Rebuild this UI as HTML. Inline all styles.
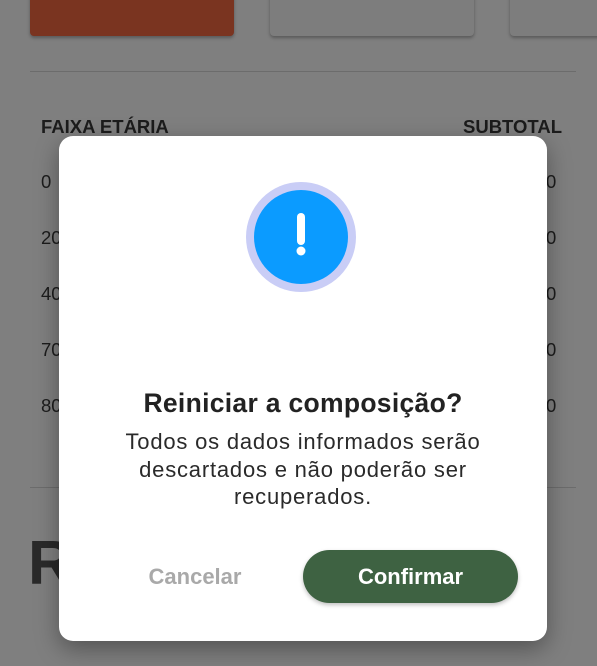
<!DOCTYPE html>
<html><head><meta charset="utf-8"><style>
body{margin:0;width:597px;height:666px;overflow:hidden;background:#7f7f7f;font-family:"Liberation Sans",sans-serif;position:relative}
.a{position:absolute}
.t{position:absolute;font-size:18.5px;color:#1c1c1c}
</style></head><body>
<div class="a" style="left:30px;top:-10px;width:204px;height:46px;background:#7a3420;border-radius:4px;box-shadow:0 2px 3px rgba(0,0,0,.3)"></div>
<div class="a" style="left:270px;top:-10px;width:204px;height:46px;background:#7d7d7d;border-radius:4px;box-shadow:0 2px 3px rgba(0,0,0,.3)"></div>
<div class="a" style="left:510px;top:-10px;width:100px;height:46px;background:#7d7d7d;border-radius:4px;box-shadow:0 2px 3px rgba(0,0,0,.3)"></div>
<div class="a" style="left:30px;top:71px;width:546px;height:1px;background:#6c6c6c"></div>
<div class="t" style="left:41px;top:116px;font-weight:bold">FAIXA ETÁRIA</div>
<div class="t" style="left:463px;top:116px;font-weight:bold">SUBTOTAL</div>
<div class="t" style="left:41px;top:171px">0</div>
<div class="t" style="left:41px;top:227px">20</div>
<div class="t" style="left:41px;top:283px">40</div>
<div class="t" style="left:41px;top:339px">70</div>
<div class="t" style="left:41px;top:395px">80</div>
<div class="t" style="left:546px;top:171px">0</div>
<div class="t" style="left:546px;top:227px">0</div>
<div class="t" style="left:546px;top:283px">0</div>
<div class="t" style="left:546px;top:339px">0</div>
<div class="t" style="left:546px;top:395px">0</div>
<div class="a" style="left:30px;top:487px;width:546px;height:1px;background:#6c6c6c"></div>
<div class="a" style="left:28px;top:528px;font-size:62px;font-weight:bold;color:#2a2a2a">R</div>
<div class="a" style="left:59px;top:136px;width:488px;height:505px;background:#fff;border-radius:14px;box-shadow:0 8px 24px rgba(0,0,0,.35)">
<svg class="a" style="left:187px;top:46px" width="110" height="110"><circle cx="55" cy="55" r="55" fill="#c9cdf6"/><circle cx="55" cy="55" r="47" fill="#0b9bff"/><rect x="51" y="31" width="8" height="32" rx="4" fill="#fff"/><circle cx="55" cy="69" r="4.5" fill="#fff"/></svg>
<div class="a" style="left:0;width:488px;top:252px;text-align:center;font-size:26.5px;font-weight:bold;color:#222;letter-spacing:0.3px">Reiniciar a composição?</div>
<div class="a" style="left:0;width:488px;top:292px;text-align:center;font-size:22px;line-height:27.5px;color:#2a2a2a;letter-spacing:0.8px">Todos os dados informados serão<br>descartados e não poderão ser<br>recuperados.</div>
<div class="a" style="left:56px;width:160px;top:428px;text-align:center;font-size:22px;font-weight:bold;color:#a9a9a9">Cancelar</div>
<div class="a" style="left:244px;top:414px;width:215px;height:53px;background:#3e6242;border-radius:27px;box-shadow:0 2px 4px rgba(0,0,0,.25);color:#fff;font-size:22px;font-weight:bold;text-align:center;line-height:53px">Confirmar</div>
</div>
</body></html>
